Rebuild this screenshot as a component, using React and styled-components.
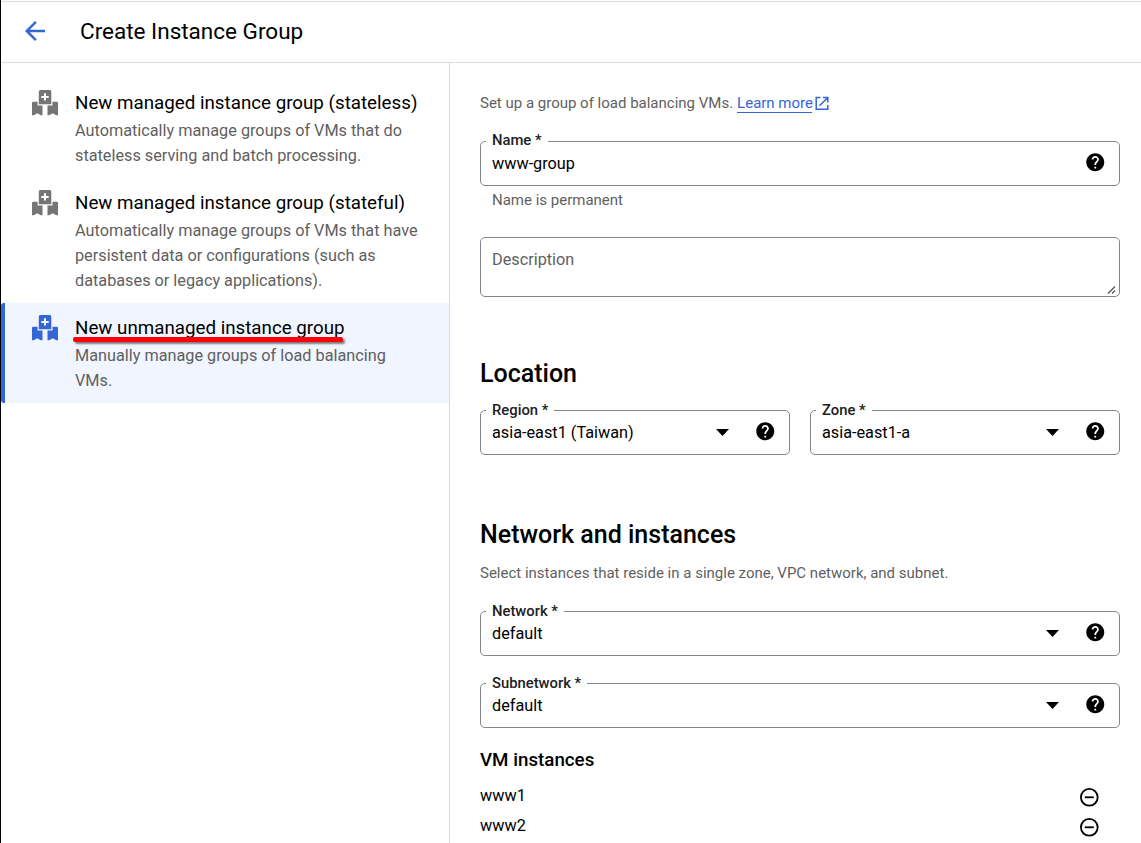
import React from "react";
import styled, { createGlobalStyle } from "styled-components";

const GlobalStyle = createGlobalStyle`
  * { box-sizing: border-box; }
  body {
    margin: 0;
    background: #fff;
    color: #000;
    font-family: Roboto, "Liberation Sans", sans-serif;
    overflow: hidden;
  }
  h1, h2, h3, p { margin: 0; }
`;

const Page = styled.div`
  height: 843px;
  display: flex;
  flex-direction: column;
  border-left: 1px solid #000;
  overflow: hidden;
`;

const Header = styled.header`
  flex: none;
  height: 62px;
  margin-top: 1px;
  display: flex;
  align-items: center;
  border-top: 1px solid #dadce0;
  border-bottom: 1px solid #dadce0;
  padding: 0 0 2px 19px;
`;

const BackIcon = styled.svg`
  width: 30px;
  height: 30px;
  fill: #3367d6;
`;

const Title = styled.h1`
  margin-left: 30px;
  font-size: 22.5px;
  font-weight: 400;
  line-height: 30px;
`;

const Body = styled.div`
  flex: 1;
  min-height: 0;
  display: flex;
`;

const Sidebar = styled.nav`
  flex: none;
  width: 449px;
  padding-top: 15px;
  border-right: 1px solid #dadce0;
`;

const Option = styled.div`
  display: flex;
  padding: 12px 20px 10px 27px;
  border-left: 4px solid ${(p) => (p.$active ? "#3367d6" : "transparent")};
  border-radius: 3px 0 0 3px;
  background: ${(p) => (p.$active ? "#f0f5ff" : "transparent")};
  color: ${(p) => (p.$active ? "#3367d6" : "#757575")};
`;

const GroupSvg = styled.svg`
  flex: none;
  width: 26px;
  height: 26px;
  margin-right: 17px;
`;

const OptionText = styled.div`
  position: relative;
`;

const OptionTitle = styled.h2`
  padding-top: 1px;
  font-size: 18.75px;
  font-weight: 400;
  line-height: 25px;
  color: #000;
  white-space: nowrap;
`;

const OptionDescription = styled.p`
  margin-top: 2px;
  font-size: 16.25px;
  line-height: 25px;
  color: #5f5f5f;
  white-space: pre-line;
`;

const Marker = styled.span`
  position: absolute;
  left: -2px;
  top: 22px;
  width: 270px;
  height: 5px;
  border-radius: 2px;
  background: #fb0007;
  box-shadow: 2px 2px 2px rgba(60, 60, 60, 0.65);
`;

const Main = styled.main`
  flex: 1;
  padding: 28px 21px 0 30px;
`;

const Text = styled.p`
  margin-top: ${(p) => p.$top || 0}px;
  font-size: 15px;
  line-height: 25px;
  color: #5f5f5f;
  display: flex;
  align-items: center;
`;

const Link = styled.a`
  margin: -1px 0 0 4px;
  padding-top: 1px;
  width: 75px;
  white-space: nowrap;
  line-height: 18px;
  color: #3367d6;
  border-bottom: 1px solid #3367d6;
`;

const ExternalIcon = styled.svg`
  width: 15px;
  height: 15px;
  margin-left: 3px;
`;

const Field = styled.div`
  position: relative;
  flex: 1;
  height: 45px;
  margin-top: ${(p) => p.$top || 0}px;
  padding: 0 15px 1px 11px;
  display: flex;
  align-items: center;
  border: 1px solid #80868b;
  border-radius: 5px;
`;

const Label = styled.label`
  position: absolute;
  left: 5px;
  top: ${(p) => (p.$low ? -10 : -11)}px;
  padding: 0 6px;
  background: #fff;
  font-size: 14.8px;
  font-weight: 500;
  line-height: 19px;
  color: #202124;
`;

const Value = styled.span`
  flex: 1;
  font-size: 16.25px;
`;

const Arrow = styled.svg`
  width: 13px;
  height: 7px;
  margin-right: 27px;
`;

const HelpSvg = styled.svg`
  width: 18px;
  height: 18px;
  margin-bottom: 2px;
  overflow: visible;
`;

const Helper = styled.p`
  margin: 2px 0 0 12px;
  font-size: 15px;
  line-height: 25px;
  color: #5f5f5f;
`;

const Description = styled.div`
  height: 60px;
  margin-top: 24px;
  padding: 9px 2px 1px 11px;
  display: flex;
  justify-content: space-between;
  border: 1px solid #80868b;
  border-radius: 5px;
  font-size: 16.25px;
  line-height: 25px;
  color: #5f5f5f;
`;

const Grip = styled.svg`
  align-self: flex-end;
  width: 10px;
  height: 10px;
`;

const Heading = styled.h2`
  margin-top: ${(p) => p.$top}px;
  font-size: 25px;
  font-weight: 500;
  line-height: 30px;
`;

const FieldRow = styled.div`
  display: flex;
  gap: 20px;
`;

const FieldStack = styled.div`
  display: flex;
  flex-direction: column;
  & > div { flex: none; }
`;

const SubHeading = styled.h3`
  margin-top: 20px;
  font-size: 18.75px;
  font-weight: 500;
  line-height: 25px;
`;

const InstanceList = styled.div`
  margin-top: 7px;
`;

const Instance = styled.div`
  height: 30px;
  padding-right: 21px;
  display: flex;
  align-items: center;
  justify-content: space-between;
  font-size: 16.25px;
`;

const RemoveSvg = styled.svg`
  width: 20px;
  height: 20px;
  margin-top: 4px;
  overflow: visible;
`;

const GroupIcon = () => (
  <GroupSvg viewBox="0 0 26 26" fill="currentColor">
    <path
      fillRule="evenodd"
      d="M8.300 0h9.500A1.500 1.500 0 0 1 19.300 1.500V14.300H6.800V1.500A1.500 1.500 0 0 1 8.300 0zM12 3.200V5.900H9.300V7.900H12V10.600H14V7.900H16.700V5.900H14V3.200z"
    />
    <path d="M1.300 11.800H5.600V15.500H10.500V25.300H8.800L5.300 23.300L1.700 25.300H0V13.100Q0 11.800 1.300 11.800z" />
    <path d="M24.700 11.800H20.500V15.500H15.500V25.300H17.200L20.700 23.300L24.300 25.300H26V13.100Q26 11.800 24.700 11.800z" />
  </GroupSvg>
);

const HelpIcon = () => (
  <HelpSvg viewBox="1.700 1.700 20 20">
    <path d="M12 2C6.480 2 2 6.480 2 12s4.480 10 10 10 10-4.480 10-10S17.520 2 12 2zm1 17h-2v-2h2v2zm2.070-7.750l-.9.920C13.450 12.900 13 13.500 13 15h-2v-.5c0-1.100.450-2.100 1.170-2.830l1.240-1.260c.370-.360.590-.860.590-1.410 0-1.100-.9-2-2-2s-2 .9-2 2H8c0-2.210 1.790-4 4-4s4 1.790 4 4c0 .880-.360 1.680-.930 2.250z" />
  </HelpSvg>
);

const RemoveIcon = () => (
  <RemoveSvg viewBox="-0.300 -0.300 20 20" fill="none" stroke="#000" strokeWidth="1.800">
    <circle cx="10" cy="10" r="8.400" />
    <path d="M5.500 10h9" />
  </RemoveSvg>
);

const OutlinedField = ({ label, value, select, top }) => (
  <Field $top={top}>
    <Label $low={select}>{label} *</Label>
    <Value>{value}</Value>
    {select && (
      <Arrow viewBox="0 0 13 7">
        <path d="M0 0h13l-6.500 7z" />
      </Arrow>
    )}
    <HelpIcon />
  </Field>
);

const options = [
  {
    title: "New managed instance group (stateless)",
    text: "Automatically manage groups of VMs that do\nstateless serving and batch processing.",
  },
  {
    title: "New managed instance group (stateful)",
    text: "Automatically manage groups of VMs that have\npersistent data or configurations (such as\ndatabases or legacy applications).",
  },
  {
    title: "New unmanaged instance group",
    text: "Manually manage groups of load balancing\nVMs.",
    active: true,
  },
];

export default function App() {
  return (
    <>
      <GlobalStyle />
      <Page>
        <Header>
          <BackIcon viewBox="0 0 24 24">
            <path d="M20 11H7.830l5.590-5.590L12 4l-8 8 8 8 1.410-1.410L7.830 13H20v-2z" />
          </BackIcon>
          <Title>Create Instance Group</Title>
        </Header>
        <Body>
          <Sidebar>
            {options.map((o) => (
              <Option key={o.title} $active={o.active}>
                <GroupIcon />
                <OptionText>
                  <OptionTitle>{o.title}</OptionTitle>
                  <OptionDescription>{o.text}</OptionDescription>
                  {o.active && <Marker />}
                </OptionText>
              </Option>
            ))}
          </Sidebar>
          <Main>
            <Text>
              Set up a group of load balancing VMs.
              <Link>Learn more</Link>
              <ExternalIcon viewBox="0.500 0 15 15" fill="none" stroke="#3367d6" strokeWidth="1.500">
                <path d="M6 1.500H1.700V13.300H13.300V9M8.500 1.500H13.300V6.500M13.300 1.500L5 9.800" />
              </ExternalIcon>
            </Text>
            <OutlinedField label="Name" value="www-group" top={25} />
            <Helper>Name is permanent</Helper>
            <Description>
              Description
              <Grip viewBox="0 0 10 10" stroke="#555" strokeWidth="1.300">
                <path d="M1 8.500L8 1.500M5 8.500L8 5.500" />
              </Grip>
            </Description>
            <Heading $top={62}>Location</Heading>
            <FieldRow>
              <OutlinedField label="Region" value="asia-east1 (Taiwan)" select top={21} />
              <OutlinedField label="Zone" value="asia-east1-a" select top={21} />
            </FieldRow>
            <Heading $top={65}>Network and instances</Heading>
            <FieldStack>
              <Text $top={11}>Select instances that reside in a single zone, VPC network, and subnet.</Text>
              <OutlinedField label="Network" value="default" select top={25} />
              <OutlinedField label="Subnetwork" value="default" select top={27} />
            </FieldStack>
            <SubHeading>VM instances</SubHeading>
            <InstanceList>
              {["www1", "www2"].map((name) => (
                <Instance key={name}>
                  {name}
                  <RemoveIcon />
                </Instance>
              ))}
            </InstanceList>
          </Main>
        </Body>
      </Page>
    </>
  );
}
